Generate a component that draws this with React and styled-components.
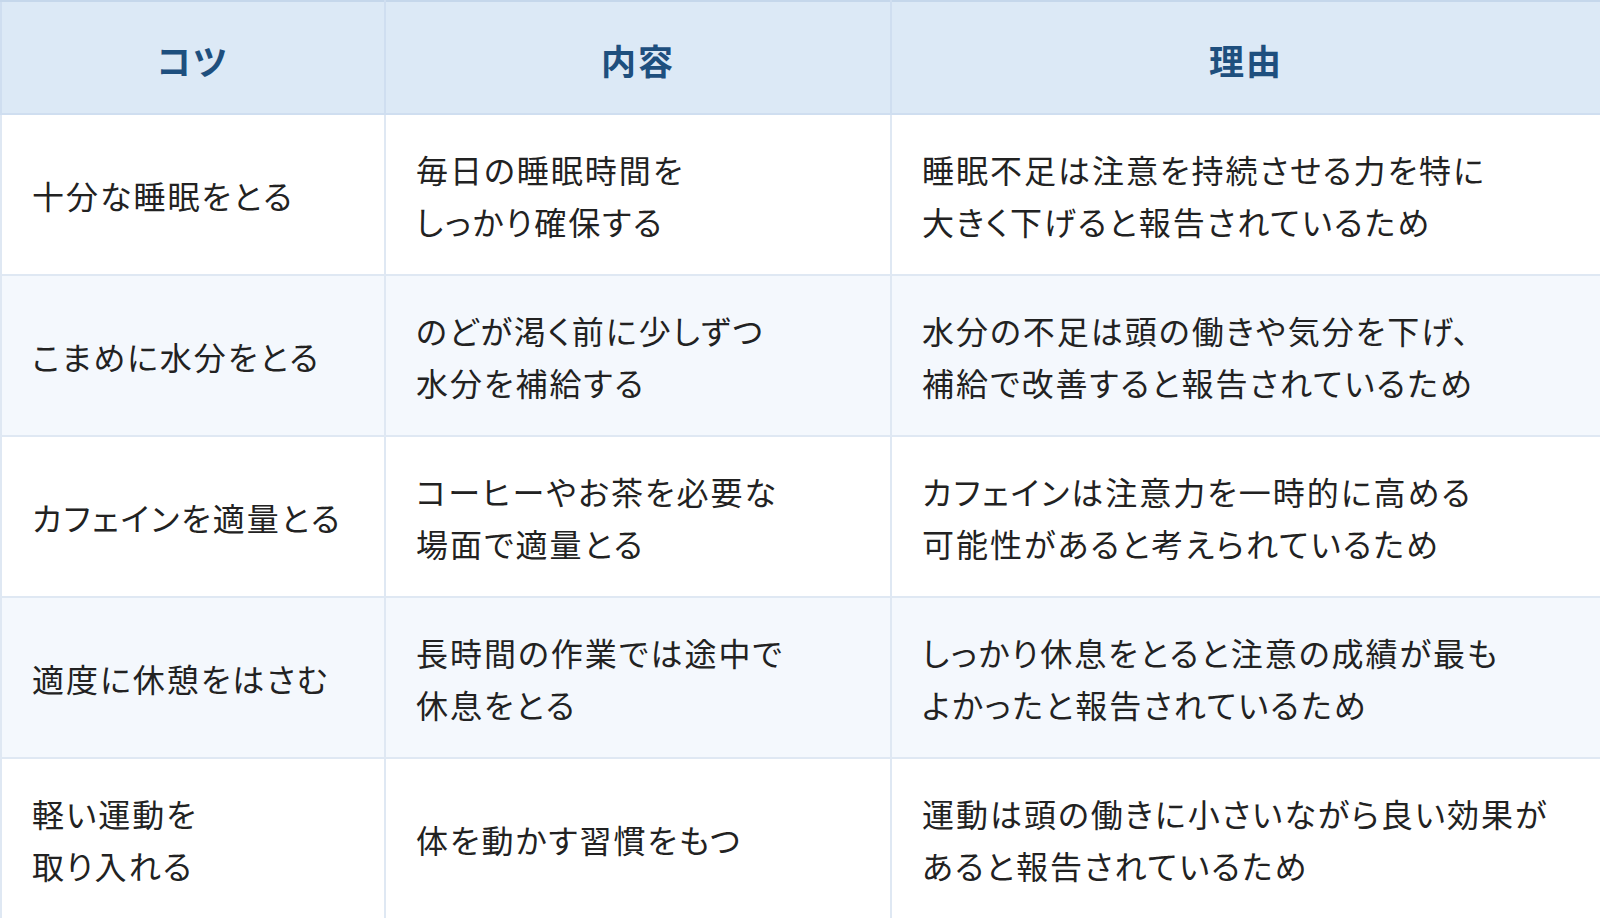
import React from "react";
import styled, { createGlobalStyle } from "styled-components";

const Global = createGlobalStyle`
  html, body { margin: 0; padding: 0; background: #ffffff; }
  body { font-family: "Noto Sans CJK JP", "Noto Sans", sans-serif; }
`;

const Table = styled.table`
  width: 1600px;
  height: 918px;
  border-collapse: collapse;
  table-layout: fixed;
  box-sizing: border-box;
  border: 2px solid #c5d7eb;
  font-family: "Noto Sans CJK JP", "Noto Sans", sans-serif;
  font-feature-settings: "palt";
`;

const HeadRow = styled.tr`
  height: 113px;
  background: #dce9f6;
`;

const HeadCell = styled.th`
  padding: 4px 30px 0;
  text-align: center;
  vertical-align: middle;
  font-size: 35px;
  font-weight: 700;
  letter-spacing: 2px;
  color: #1e4f7e;
  border: 2px solid #cfdef0;
  border-top-color: #c5d7eb;
`;

const BodyRow = styled.tr`
  height: 161px;
  background: ${(p) => (p.$alt ? "#f4f8fd" : "#ffffff")};
`;

const Cell = styled.td`
  padding: 0 30px;
  vertical-align: middle;
  font-size: 32px;
  font-weight: 400;
  line-height: 52px;
  letter-spacing: 2px;
  color: #222222;
  border: 2px solid #dfe8f3;
`;

const Line = styled.span`
  display: block;
  white-space: nowrap;
`;

const rows = [
  [["十分な睡眠をとる"], ["毎日の睡眠時間を", "しっかり確保する"], ["睡眠不足は注意を持続させる力を特に", "大きく下げると報告されているため"]],
  [["こまめに水分をとる"], ["のどが渇く前に少しずつ", "水分を補給する"], ["水分の不足は頭の働きや気分を下げ、", "補給で改善すると報告されているため"]],
  [["カフェインを適量とる"], ["コーヒーやお茶を必要な", "場面で適量とる"], ["カフェインは注意力を一時的に高める", "可能性があると考えられているため"]],
  [["適度に休憩をはさむ"], ["長時間の作業では途中で", "休息をとる"], ["しっかり休息をとると注意の成績が最も", "よかったと報告されているため"]],
  [["軽い運動を", "取り入れる"], ["体を動かす習慣をもつ"], ["運動は頭の働きに小さいながら良い効果が", "あると報告されているため"]],
];

export default function App() {
  return (
    <>
      <Global />
      <Table>
        <colgroup>
          <col style={{ width: "384px" }} />
          <col style={{ width: "506px" }} />
          <col style={{ width: "710px" }} />
        </colgroup>
        <thead>
          <HeadRow>
            <HeadCell>コツ</HeadCell>
            <HeadCell>内容</HeadCell>
            <HeadCell>理由</HeadCell>
          </HeadRow>
        </thead>
        <tbody>
          {rows.map((r, i) => (
            <BodyRow key={i} $alt={i % 2 === 1}>
              {r.map((c, j) => (
                <Cell key={j}>
                  {c.map((l, k) => (
                    <Line key={k}>{l}</Line>
                  ))}
                </Cell>
              ))}
            </BodyRow>
          ))}
        </tbody>
      </Table>
    </>
  );
}
